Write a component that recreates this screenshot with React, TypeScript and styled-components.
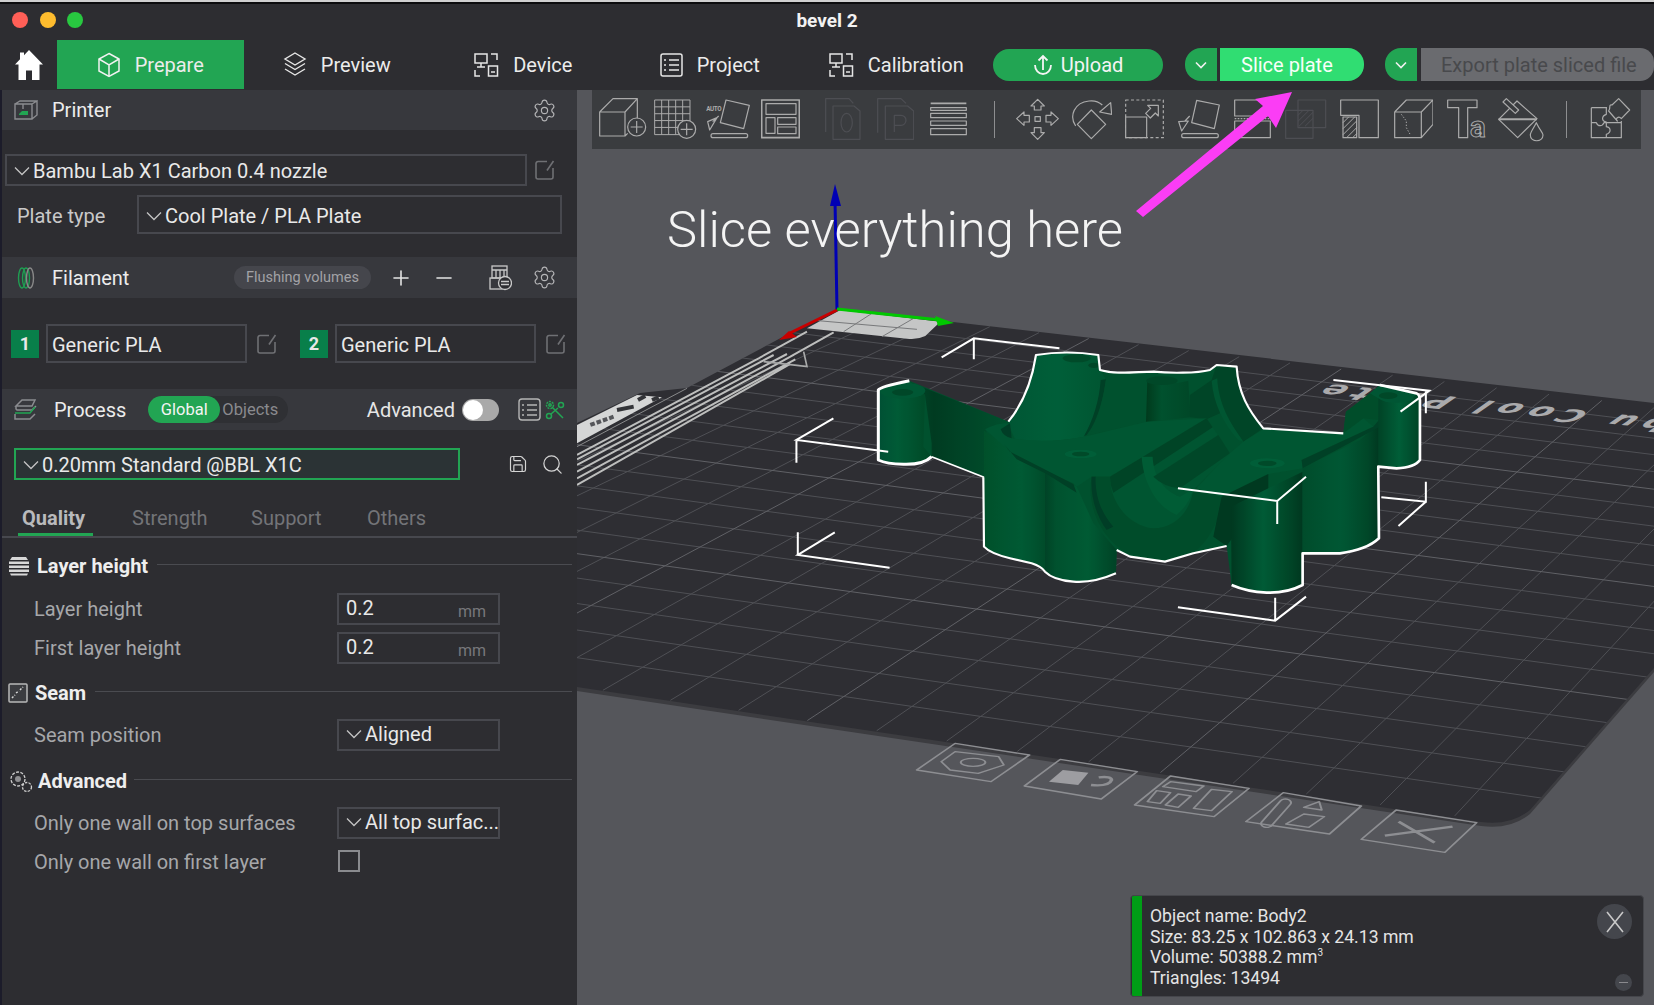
import React from 'react'
import styled, { createGlobalStyle } from 'styled-components'
import { Settings, Search, Save, Plus, Minus } from 'lucide-react'

const Global = createGlobalStyle`
  html, body { margin: 0; padding: 0; background: #2d2d31; }
  body { font-family: Roboto, "Liberation Sans", sans-serif; }
`

const Window = styled.div`
  width: 1654px;
  height: 1005px;
  overflow: hidden;
  display: flex;
  flex-direction: column;
  background: #2d2d31;
  color: #e6e6e6;
  border-top: 2px solid #d0d0d0;
  box-sizing: border-box;
`
const BlackLine = styled.div`
  height: 2px;
  background: #0c0c0e;
`
const TitleBar = styled.div`
  height: 36px;
  display: grid;
  grid-template-columns: 1fr auto 1fr;
  align-items: center;
  padding: 0 12px 4px 12px;
  box-sizing: border-box;
`
const Lights = styled.div`
  display: flex;
  gap: 11.5px;
`
const Light = styled.span<{ $c: string }>`
  width: 16px;
  height: 16px;
  border-radius: 50%;
  background: ${p => p.$c};
`
const Title = styled.div`
  font-size: 19px;
  font-weight: 700;
  color: #f2f2f2;
`
const TabBar = styled.div`
  height: 50px;
  display: flex;
  align-items: flex-start;
`
const HomeBtn = styled.div`
  width: 57px;
  height: 49px;
  display: flex;
  align-items: center;
  justify-content: center;
`
const Tab = styled.div<{ $active?: boolean }>`
  width: 186.5px;
  height: 49px;
  display: flex;
  align-items: center;
  justify-content: center;
  gap: 14px;
  font-size: 20px;
  color: #ececec;
  background: ${p => (p.$active ? '#22a553' : 'transparent')};
`
const UploadBtn = styled.div`
  margin: 9px 22px 0 3.5px;
  width: 170px;
  height: 32px;
  border-radius: 16px;
  background: #22a553;
  display: flex;
  align-items: center;
  justify-content: center;
  gap: 8px;
  font-size: 20px;
  color: #f4f4f4;
`
const DropBtn = styled.div`
  margin-top: 8px;
  width: 32px;
  height: 33px;
  border-radius: 16px 0 0 16px;
  background: #22a553;
  display: flex;
  align-items: center;
  justify-content: center;
`
const SliceBtn = styled.div`
  margin: 8px 21px 0 3px;
  width: 144px;
  height: 33px;
  border-radius: 0 16px 16px 0;
  background: #30dd72;
  display: flex;
  align-items: center;
  padding: 1px 0 0 21px;
  box-sizing: border-box;
  font-size: 20px;
  color: #f8fff9;
`
const ExportBtn = styled.div`
  margin: 8px 0 0 4px;
  width: 233px;
  height: 33px;
  border-radius: 0 14px 14px 0;
  background: #6a6b6f;
  display: flex;
  align-items: center;
  padding: 1px 0 0 20px;
  box-sizing: border-box;
  font-size: 20px;
  color: #48494c;
`
const Body = styled.div`
  flex: 1;
  display: flex;
  min-height: 0;
`
const Sidebar = styled.aside`
  width: 577px;
  flex: none;
  background: #2d2d31;
  border-left: 2px solid #1c1c2a;
  box-sizing: border-box;
  font-size: 20px;
`
const PanelHead = styled.div<{ $mt?: number; $h?: number; $pr?: number }>`
  height: ${p => p.$h ?? 40}px;
  margin-top: ${p => p.$mt ?? 0}px;
  background: #37383d;
  display: flex;
  align-items: center;
  padding: 0 ${p => p.$pr ?? 20}px 0 12px;
  box-sizing: border-box;
`
const HeadLabel = styled.span<{ $ml?: number }>`
  font-size: 20px;
  color: #ececec;
  margin-left: ${p => p.$ml ?? 14}px;
`
const Spacer = styled.span`
  flex: 1;
`
const IconBtn = styled.span<{ $ml?: number }>`
  display: inline-flex;
  margin-left: ${p => p.$ml ?? 0}px;
  color: #b9b9b9;
`
const Row = styled.div<{ $mt: number; $pl?: number }>`
  display: flex;
  align-items: center;
  margin-top: ${p => p.$mt}px;
  padding-left: ${p => p.$pl ?? 0}px;
`
const Combo = styled.div<{ $w: number; $h: number; $ml?: number; $green?: boolean; $pl?: number }>`
  width: ${p => p.$w}px;
  height: ${p => p.$h}px;
  margin-left: ${p => p.$ml ?? 0}px;
  flex: none;
  box-sizing: border-box;
  border: 2px solid ${p => (p.$green ? '#22a553' : '#47484e')};
  background: ${p => (p.$green ? '#2b3335' : 'transparent')};
  display: flex;
  align-items: center;
  gap: 3px;
  padding: ${p => (p.$h > 35 ? 3 : 1)}px 0 0 ${p => p.$pl ?? 7}px;
  font-size: 20px;
  color: #e9e9e9;
  white-space: nowrap;
  overflow: hidden;
`
const PlateLabel = styled.span`
  width: 120px;
  margin-left: 15px;
  padding-top: 2px;
  font-size: 20px;
  color: #c9c9c9;
`
const Badge = styled.span<{ $ml: number }>`
  width: 28px;
  height: 28px;
  margin-left: ${p => p.$ml}px;
  background: #087f4a;
  color: #e8e8e8;
  font-size: 18px;
  font-weight: 700;
  display: flex;
  align-items: center;
  justify-content: center;
  flex: none;
`
const FlushPill = styled.span`
  width: 137px;
  height: 23px;
  border-radius: 12px;
  background: #45464c;
  color: #a2a2a6;
  font-size: 14.5px;
  display: flex;
  align-items: center;
  justify-content: center;
`
const Segmented = styled.div`
  margin-left: 22px;
  width: 140px;
  height: 27px;
  border-radius: 14px;
  background: #2f3034;
  display: flex;
  align-items: center;
  font-size: 16.5px;
  color: #8a8a8e;
`
const SegActive = styled.span`
  width: 72px;
  height: 27px;
  border-radius: 14px;
  background: #22a553;
  color: #f4f4f4;
  display: flex;
  align-items: center;
  justify-content: center;
  margin-right: 2px;
`
const Toggle = styled.span`
  width: 37px;
  height: 22px;
  border-radius: 11px;
  background: #a9a9a9;
  margin-left: 7px;
  display: flex;
  align-items: center;
  flex: none;
`
const Knob = styled.span`
  width: 20px;
  height: 20px;
  border-radius: 50%;
  background: #fff;
  margin-left: 1px;
`
const Tabs = styled.div`
  margin-top: 20px;
  height: 36px;
  border-bottom: 2px solid #47484e;
  box-sizing: content-box;
  display: flex;
  padding-left: 20px;
`
const SubTab = styled.div<{ $active?: boolean; $w: number }>`
  width: ${p => p.$w}px;
  font-size: 20px;
  font-weight: ${p => (p.$active ? 700 : 400)};
  color: ${p => (p.$active ? '#b9babc' : '#737478')};
  height: 36px;
  line-height: 36px;
  position: relative;
  &::after {
    content: '';
    display: ${p => (p.$active ? 'block' : 'none')};
    position: absolute;
    left: -4px;
    bottom: 0;
    width: 75px;
    height: 3px;
    background: #22a553;
  }
`
const GroupHead = styled.div<{ $mt: number; $gap?: number }>`
  display: flex;
  align-items: center;
  gap: ${p => p.$gap ?? 7}px;
  margin-top: ${p => p.$mt}px;
  padding: 0 5px 0 6px;
  height: 24px;
  font-size: 20px;
  font-weight: 700;
  color: #eeeeee;
`
const GroupLine = styled.span`
  flex: 1;
  height: 1px;
  background: #4a4b50;
  margin-left: 2px;
  margin-top: -3px;
`
const Field = styled.div<{ $mt: number }>`
  display: flex;
  align-items: center;
  margin-top: ${p => p.$mt}px;
  padding-left: 32px;
  height: 32px;
`
const FieldLabel = styled.span`
  width: 303px;
  font-size: 20px;
  color: #a6a7aa;
`
const ValueBox = styled.div`
  width: 163px;
  height: 32px;
  box-sizing: border-box;
  border: 2px solid #47484e;
  display: flex;
  align-items: center;
  padding: 0 12px 2px 7px;
  font-size: 20px;
  color: #e8e8e8;
  white-space: nowrap;
  overflow: hidden;
`
const Unit = styled.span`
  margin-left: auto;
  font-size: 16px;
  color: #77787c;
  padding-top: 7px;
`
const SelectBox = styled(ValueBox)`
  gap: 3px;
  padding: 0 0 2px 7px;
`
const CheckBox = styled.span`
  width: 22px;
  height: 22px;
  margin: -3px 0 0 1px;
  box-sizing: border-box;
  border: 2px solid #8a8b8f;
`
const Viewport = styled.main`
  position: relative;
  flex: 1;
  background: #55565b;
  overflow: hidden;
`
const Scene = styled.svg`
  position: absolute;
  inset: 0;
  width: 100%;
  height: 100%;
`
const ModelShading = styled.g`
  filter: brightness(0.9);
`
const Toolbar = styled.div`
  position: absolute;
  left: 15px;
  top: 0;
  width: 1049px;
  height: 59px;
  background: #3a3c3f;
  display: flex;
  align-items: center;
  padding-left: 4.4px;
  box-sizing: border-box;
`
const ToolGroup = styled.div<{ $slot: number; $ml?: number }>`
  display: flex;
  flex: none;
  margin-left: ${p => p.$ml ?? 0}px;
  & > span {
    width: ${p => p.$slot}px;
    display: flex;
    justify-content: center;
  }
`
const Divider = styled.span<{ $ml: number }>`
  width: 1px;
  height: 37px;
  background: #8d8e90;
  margin-left: ${p => p.$ml}px;
  flex: none;
`
const Callout = styled.div`
  position: absolute;
  left: 90px;
  top: 108px;
  font-family: Roboto, "Liberation Sans", sans-serif;
  font-weight: 300;
  font-size: 50.7px;
  line-height: 64px;
  color: #f4f4f4;
  white-space: nowrap;
`
const Notice = styled.div`
  position: absolute;
  right: 10px;
  bottom: 8px;
  width: 514px;
  height: 102px;
  box-sizing: border-box;
  border: 1px solid #45464b;
  border-radius: 4px;
  background: #2d2d31;
  display: flex;
  overflow: hidden;
`
const NoticeBar = styled.span`
  width: 10px;
  margin-left: 1px;
  background: #009e16;
  flex: none;
`
const NoticeText = styled.div`
  margin: 10px 0 0 8px;
  font-size: 17.6px;
  line-height: 20.7px;
  color: #e4e4e4;
  white-space: nowrap;
  & sup { font-size: 10px; line-height: 0; }
`
const CloseBtn = styled.span`
  position: absolute;
  right: 11px;
  top: 8px;
  width: 35px;
  height: 35px;
  border-radius: 50%;
  background: #44464c;
  display: flex;
  align-items: center;
  justify-content: center;
`
const MinBtn = styled.span`
  position: absolute;
  right: 11px;
  bottom: 5px;
  width: 17px;
  height: 17px;
  border-radius: 50%;
  background: #44464c;
  display: flex;
  align-items: center;
  justify-content: center;
`

/* little icons */
const Chevron = ({ c = '#c4c4c4' }: { c?: string }) => (
  <svg width="16" height="10" viewBox="0 0 16 10" fill="none" style={{ flex: 'none' }}>
    <path d="M1 1.5 8 8.5 15 1.5" stroke={c} strokeWidth="1.3" />
  </svg>
)
const SmallChev = () => (
  <svg width="12" height="8" viewBox="0 0 12 8" fill="none">
    <path d="M1 1.5 6 6.5 11 1.5" stroke="#f0f0f0" strokeWidth="1.6" />
  </svg>
)
const EditIcon = () => (
  <svg width="20" height="20" viewBox="0 0 20 20" fill="none" stroke="#6f7074" strokeWidth="1.6">
    <path d="M12 1.5H3a2 2 0 0 0-2 2V17a2 2 0 0 0 2 2h13a2 2 0 0 0 2-2V8" />
    <path d="M18.5 1 12 10.5" />
  </svg>
)
const Cog = () => <Settings size={25} strokeWidth={1.1} color="#b4b4b6" />

const Home = () => (
  <svg width="28" height="30" viewBox="0 0 28 30" fill="#fff">
    <path d="M14 0 28 14.5h-3.5V30H17V20.5h-6V30H3.5V14.5H0L5 9.3V2.5h4v2.700z" />
  </svg>
)
const BoxIcon = () => (
  <svg width="24" height="26" viewBox="0 0 24 26" fill="none" stroke="#f2f2f2" strokeWidth="1.5">
    <path d="M12 1.5 22 7v12l-10 5.500L2 19V7z" />
    <path d="M2 7l10 6 10-6M12 13v11" />
  </svg>
)
const LayersIcon = () => (
  <svg width="24" height="25" viewBox="0 0 24 25" fill="none" stroke="#e6e6e6" strokeWidth="1.4">
    <path d="M12 1 22 7l-10 6L2 7z" />
    <path d="M2 11.5l10 6 10-6M2 17l10 6 10-6" />
  </svg>
)
const DeviceIcon = () => (
  <svg width="25" height="24" viewBox="0 0 25 24" fill="none" stroke="#e6e6e6" strokeWidth="1.5">
    <rect x="1" y="1" width="12" height="9" />
    <path d="M7 10v4M3 14h8M17 1h6v6M1 17v6h5" />
    <rect x="14.5" y="13" width="9" height="10" />
    <path d="M17 19h4" />
  </svg>
)
const ProjectIcon = () => (
  <svg width="23" height="24" viewBox="0 0 23 24" fill="none" stroke="#e6e6e6" strokeWidth="1.5">
    <rect x="1" y="1" width="21" height="22" rx="2" />
    <path d="M4 7h2M9 7h10M4 12h2M9 12h10M4 17h2M9 17h10" />
  </svg>
)
const UploadIcon = () => (
  <svg width="20" height="22" viewBox="0 0 20 22" fill="none" stroke="#f4f4f4" strokeWidth="1.8">
    <path d="M10 16V2M5.500 6.500 10 2l4.500 4.500" />
    <path d="M2 11c0 5 3.500 9 8 9s8-4 8-9" />
  </svg>
)
const PrinterIcon = () => (
  <svg width="24" height="20" viewBox="0 0 24 20" fill="none" stroke="#8b8c90" strokeWidth="1.4">
    <path d="M1 4h17v15H1zM18 4l5-3v14l-5 4M1 4l5-3h17" />
    <path d="M9 4v5" />
    <path d="M5 14l3-3h6v4H5z" fill="#22a553" stroke="none" />
  </svg>
)
const SpoolIcon = () => (
  <svg width="24" height="22" viewBox="0 0 24 22" fill="none" stroke="#888" strokeWidth="1.4">
    <ellipse cx="8" cy="11" rx="3.5" ry="10" stroke="#1f9d52" />
    <ellipse cx="12" cy="11" rx="3.5" ry="10" stroke="#1f9d52" />
    <ellipse cx="16" cy="11" rx="3.5" ry="10" />
  </svg>
)
const ProcessIcon = () => (
  <svg width="23" height="21" viewBox="0 0 23 21" fill="none" strokeWidth="1.5">
    <path d="M2 7 8 1h13l-3 6z" stroke="#8b8c90" />
    <path d="M2 7v3l1 1h15l4-4" stroke="#8b8c90" />
    <path d="M1 14h15l5-6" stroke="#22a553" />
    <path d="M1 15v5h15l5-5" stroke="#8b8c90" />
  </svg>
)
const MatrixIcon = () => (
  <svg width="23" height="23" viewBox="0 0 23 23" fill="none" stroke="#b5b5b5" strokeWidth="1.4">
    <rect x="1" y="1" width="21" height="21" rx="3" />
    <path d="M4 7h2M9 7h10M4 12h2M9 12h10M4 17h2M9 17h10" />
  </svg>
)
const ToolsIcon = () => (
  <svg width="20" height="20" viewBox="0 0 20 20" fill="none" stroke="#22a553" strokeWidth="1.5">
    <circle cx="5" cy="5" r="3.5" strokeDasharray="2 1" />
    <circle cx="5" cy="5" r="1.2" />
    <circle cx="16" cy="5" r="2.5" />
    <circle cx="4" cy="16" r="2.5" />
    <path d="M7 7l11 11M13 8l-7 6" />
  </svg>
)
const BlendIcon = () => (
  <svg width="23" height="26" viewBox="0 0 23 26" fill="none" stroke="#c9c9c9" strokeWidth="1.3">
    <rect x="3" y="1" width="15" height="12" />
    <path d="M3 5h15M7 5v8M11 5v8M15 5v8" />
    <rect x="1" y="13" width="12" height="11" />
    <circle cx="16" cy="18" r="6.5" fill="#2d2d31" />
    <path d="M12 16.5h8M12 19.5h8" />
  </svg>
)
const StackIcon = () => (
  <svg width="22" height="20" viewBox="0 0 22 20" fill="#d8d8d8">
    <path d="M4 1h14l2 3H2z" />
    <path d="M1 5.5h20v2.500H1zM1 9.5h20v2.500H1zM1 13.5h20v2.500H1zM2 17.5h18l-1 2H3z" />
  </svg>
)
const SeamIcon = () => (
  <svg width="20" height="20" viewBox="0 0 20 20" fill="none" stroke="#b8b8b8" strokeWidth="1.5">
    <rect x="1" y="1" width="18" height="18" rx="1" fill="#3b3c40" />
    <path d="M4 15 7 12M8 10l3-2M12 7l3-3" strokeDasharray="2 1.5" stroke="#d8d8d8" />
  </svg>
)
const GearsIcon = () => (
  <svg width="25" height="24" viewBox="0 0 25 24" fill="none" stroke="#cfcfcf" strokeWidth="1.3">
    <circle cx="10" cy="10" r="7" strokeDasharray="3 1.4" />
    <circle cx="10" cy="10" r="3" fill="#8f8f92" stroke="none" />
    <circle cx="19" cy="18" r="4.5" strokeDasharray="2.5 1.2" fill="#2d2d31" />
  </svg>
)

/* toolbar icons are traced at three times their size, x0..x0+w is the span of the glyph */
const TI = ({ x, w, dim, children }: { x: number; w: number; dim?: boolean; children: React.ReactNode }) => (
  <svg width={w / 3} height={140 / 3} viewBox={`${x} 20 ${w} 140`} fill="none" stroke={dim ? '#4d4e53' : '#ababab'} strokeWidth="3.6" strokeLinejoin="round">
    {children}
  </svg>
)
const tb = '#3a3c3f'
const gridSteps = [0, 21, 42, 63, 84, 106]
const hatch = 'M560 78 575 63M560 96 593 63M563 111 605 69M581 111 605 87'

const tools = {
  cube: <TI x={20} w={144}><path d="M22 68H98V140H22ZM22 68 62 28H135L98 68M135 28V88M98 140l8-8" /><circle cx="133" cy="113" r="27" fill={tb} /><path d="M133 95V131M115 113H151" /></TI>,
  grid: <TI x={185} w={128}><path d={gridSteps.map(g => `M${187 + g} 32V136M187 ${32 + g * 0.98}H293`).join('')} strokeWidth="3" /><circle cx="283" cy="120" r="27" fill={tb} /><path d="M283 102V138M265 120H301" /></TI>,
  auto: <TI x={342} w={132}><path d="M402 32 472 48 455 118 385 100Z" /><path d="M347 97 375 85 353 122ZM362 97 380 80" /><rect x="357" y="133" width="110" height="12" rx="6" /><text x="343" y="66" fontSize="19" fontWeight="700" fill="#ababab" stroke="none" fontFamily="Roboto" textLength="46">AUTO</text></TI>,
  layout: <TI x={505} w={117}><rect x="507" y="32" width="113" height="113" strokeWidth="5" /><rect x="520" y="43" width="90" height="32" /><rect x="520" y="85" width="27" height="47" /><rect x="555" y="85" width="55" height="20" /><rect x="555" y="113" width="55" height="20" /></TI>,
  o: <TI x={698} w={107} dim><path d="M700 128V28H770L783 42M722 50H785L803 65V150H722Z" /><ellipse cx="763" cy="100" rx="17" ry="28" /></TI>,
  p: <TI x={853} w={112} dim><path d="M855 130V28H925L940 42M878 50H945L963 65V150H878Z" /><path d="M905 128V78H925a15 15 0 0 1 0 30H905" /></TI>,
  layers: <TI x={1013} w={111}><path d="M1015 42H1122" strokeWidth="5" /><rect x="1015" y="55" width="107" height="8" /><rect x="1015" y="72" width="107" height="13" /><rect x="1015" y="95" width="107" height="13" /><rect x="1015" y="118" width="107" height="18" /></TI>,
  move: <TI x={1273} w={129}><path d="M1338 30 1358 50H1348V62H1328V50H1318ZM1338 150 1358 130H1348V115H1328V130H1318ZM1275 88 1297 68V78H1313V98H1297V108ZM1400 88 1378 68V78H1363V98H1378V108Z" /><rect x="1330" y="82" width="16" height="14" /></TI>,
  rotate: <TI x={1436} w={124}><path d="M1497 62 1540 105 1497 148 1455 105Z" /><path d="M1450 110C1430 80 1445 40 1490 35 1505 33 1520 38 1530 47" /><path d="M1555 40 1558 75 1522 68Z" /></TI>,
  scale: <TI x={40} w={118}><path d="M42 32H155V145H42Z" strokeDasharray="9 7" /><rect x="42" y="83" width="63" height="62" fill={tb} /><path d="M108 48H140V80L131 71 116 86 102 72 117 57Z" /></TI>,
  flatten: <TI x={201} w={126}><path d="M257 33 325 47 310 118 242 100Z" /><path d="M203 97 232 95 212 125ZM222 95 236 80" /><rect x="212" y="133" width="110" height="12" rx="6" /></TI>,
  cut: <TI x={368} w={111}><rect x="370" y="32" width="107" height="48" /><path d="M370 88H477" strokeDasharray="5 4" /><rect x="370" y="95" width="107" height="50" /></TI>,
  overlap: <TI x={521} w={124} dim><rect x="560" y="32" width="83" height="83" /><rect x="523" y="63" width="82" height="84" /><path d={hatch} strokeWidth="3" /></TI>,
  lshape: <TI x={688} w={117}><path d="M690 32H803V145H745V78H690Z" /><path d="M697 83H738V145H697Z" /><path d="M697 100 714 83M697 118 732 83M697 136 738 95M708 145 738 115M726 145 738 133" strokeWidth="3" /></TI>,
  crack: <TI x={848} w={119}><path d="M850 68H930V145H850ZM850 68 885 32H965L930 68M965 32V105L930 145" /><path d="M870 75 885 95 885 115 898 138" strokeDasharray="4 5" strokeWidth="3" /></TI>,
  ta: <TI x={1010} w={120}><path d="M1012 32H1100V55H1072V145H1045V55H1012Z" /><text x="1079" y="144" fontSize="88" fontFamily="Roboto" fontWeight="700" strokeWidth="3">a</text></TI>,
  bucket: <TI x={1163} w={137}><path d="M1220 35 1280 88 1222 145 1165 90Z" /><path d="M1165 90H1280" strokeWidth="6" /><path d="M1178 38 1188 28 1225 62 1215 72Z" fill={tb} /><path d="M1278 100C1265 125 1260 130 1260 137 1260 160 1298 160 1298 137 1298 130 1290 125 1278 100Z" /></TI>,
  puzzle: <TI x={1436} w={122}><path d="M1440 55H1487M1440 55V145H1530V95M1485 55V75C1470 80 1470 95 1485 98V112C1500 115 1500 130 1485 135V145M1440 100H1455C1460 112 1472 112 1478 100H1530" /><path d="M1522 28 1555 62 1530 88C1522 78 1510 88 1518 95L1505 80 1492 65C1500 55 1490 45 1502 47Z" /></TI>,
}

/* the bed grid */
const quad = [[844, 309], [1871, 433], [1530, 827], [146, 623]]
const homography = () => {
  const [[x0, y0], [x1, y1], [x2, y2], [x3, y3]] = quad
  const dx1 = x1 - x2, dx2 = x3 - x2, sx = x0 - x1 + x2 - x3
  const dy1 = y1 - y2, dy2 = y3 - y2, sy = y0 - y1 + y2 - y3
  const den = dx1 * dy2 - dx2 * dy1
  const g = (sx * dy2 - dx2 * sy) / den
  const h = (dx1 * sy - sx * dy1) / den
  const a = x1 - x0 + g * x1, b = x3 - x0 + h * x3
  const d = y1 - y0 + g * y1, e = y3 - y0 + h * y3
  return (u: number, v: number) => {
    const w = g * u + h * v + 1
    return `${((a * u + b * v + x0) / w).toFixed(1)} ${((d * u + e * v + y0) / w).toFixed(1)}`
  }
}
const gridPaths = () => {
  const map = homography()
  const n = 20
  let minor = ''
  let major = ''
  for (let i = 1; i < n; i++) {
    const t = i / n
    const seg = `M${map(t, 0)}L${map(t, 1)}M${map(0, t)}L${map(1, t)}`
    if (i % 5 === 0) major += seg
    else minor += seg
  }
  return { minor, major }
}
const { minor, major } = gridPaths()
const platePath = 'M837 310L953 322 1654 403V668L1530 810Q1510 826 1481 822L577 687V423L640 393 687 388 790 333Z'

const Bed = () => (
  <>
    <defs>
      <clipPath id="plate"><path d={platePath} /></clipPath>
    </defs>
    <path d={platePath} fill="#3c3c40" transform="translate(0 4)" />
    <path d={platePath} fill="#2e2e33" />
    <g clipPath="url(#plate)" fill="none">
      <path d={minor} stroke="#4f5055" strokeWidth="1" />
      <path d={major} stroke="#606166" strokeWidth="1" />
    </g>
    <g clipPath="url(#plate)">
      {/* corner tile and stripes, traced at 3x */}
      <g transform="translate(577 300) scale(.3333)" fill="none" stroke="#bdbebd" strokeWidth="6">
        <path d="M790 30 1090 65 1045 108Q1020 120 990 116L690 85Z" fill="#c5c6c6" stroke="none" />
        <path d="M700 60 1020 88M885 40 800 95M1010 55 915 110" stroke="#77787a" strokeWidth="3" />
        <path d="M690 95 545 175M770 97 640 170M640 192 0 555M655 178 0 535M650 165 0 515M630 162 0 495M590 165 0 478M545 175 0 465" />
        <path d="M680 155 690 200 560 185" stroke="#a9aaaa" strokeWidth="5" />
        <path d="M0 440 330 265" stroke="#8a8b8c" strokeWidth="3" />
        <path d="M0 375 180 285 255 292 0 430Z" fill="#d5d6d6" stroke="none" />
        <g stroke="#333438" strokeWidth="12">
          <path d="M183 300 205 288M225 300 245 292M120 330 170 320" />
        </g>
        <path d="M40 375 110 350" stroke="#55565a" strokeWidth="12" strokeDasharray="14 6" />
      </g>
    </g>
    <text transform="translate(1323 383) rotate(186) skewX(-49) scale(1.8 1)" textAnchor="end" fontFamily="DejaVu Sans, sans-serif" fontWeight="700" fontSize="19" letterSpacing="4.2" fill="#aaaaac">Bambu Cool Plate</text>
    {/* logos printed in front of the bed */}
    <g transform="translate(850 720) scale(.5128 .3333)" fill="none" stroke="#8d8e92" strokeWidth="4" strokeLinejoin="round">
      <path d="M205 70 350 105 275 185 130 150z" />
      <path d="M205 95 290 110 300 135 250 160 195 150 178 125z" />
      <ellipse cx="240" cy="127" rx="24" ry="12" />
      <path d="M410 118 560 155 490 237 340 198z" />
      <path d="M415 150 465 158 445 195 388 185z" fill="#9d9da1" stroke="none" />
      <path d="M470 195Q505 200 510 180 510 168 485 172" strokeWidth="7" />
      <path d="M625 168 778 205 710 290 555 255z" />
      <path d="M625 185 690 198 675 215 610 200zM598 212 625 218 605 250 580 245zM640 222 665 228 640 262 615 255zM705 208 745 215 705 272 670 265z" />
      <path d="M845 218 997 258 935 342 772 305z" />
      <rect x="0" y="0" width="22" height="95" rx="11" transform="translate(845 233) rotate(30)" />
      <path d="M885 282 925 290 895 322 850 312zM885 262 915 245 920 270z" />
      <path d="M1065 270 1222 308 1160 397 997 358z" />
      <path d="M1043 347 1175 320M1070 305 1140 368" strokeWidth="7" />
    </g>
  </>
)

const Grad = ({ id, stops }: { id: string; stops: [number, string][] }) => (
  <linearGradient id={id} x1="0" x2="1" y1="0" y2="0">
    {stops.map(([o, c]) => <stop key={o} offset={o} stopColor={c} />)}
  </linearGradient>
)

const silhouette =
  'M55 150Q60 140 148 122L445 245C490 190 515 130 528 45Q620 30 715 45L720 90C770 105 830 95 880 95 930 100 1010 100 1050 90L1070 75 1130 80C1135 160 1165 210 1210 265L1450 280 1458 215 1530 160 1560 135 1670 160Q1680 165 1680 180L1680 360Q1665 382 1610 385L1555 380 1557 595Q1520 630 1440 640L1328 640 1328 735Q1280 760 1220 758 1160 755 1115 735L1100 618 1000 640 915 665 810 650 770 630 768 700Q700 730 640 725 580 720 555 695 545 680 515 670L450 655Q390 640 372 620L370 412 215 350Q190 375 130 373 80 372 55 360Z'

const Model = () => (
  <>
    <g transform="translate(860 340) scale(.3333)">
      <defs>
        <Grad id="post" stops={[[0, '#00593a'], [0.35, '#00653c'], [0.8, '#00562f'], [1, '#004e2b']]} />
        <Grad id="arm" stops={[[0, '#004f2c'], [0.25, '#004225'], [1, '#005a33']]} />
        <Grad id="lobe" stops={[[0, '#00603a'], [0.5, '#00693f'], [1, '#005f37']]} />
        <Grad id="leftA" stops={[[0, '#00592f'], [0.6, '#00643a'], [1, '#00532e']]} />
        <Grad id="leftB" stops={[[0, '#004a2a'], [0.15, '#005a33'], [0.6, '#00653a'], [1, '#004a2a']]} />
        <Grad id="colR" stops={[[0, '#003e23'], [0.45, '#00653c'], [0.8, '#004e2c'], [1, '#003e23']]} />
        <Grad id="bodyR" stops={[[0, '#005530'], [0.5, '#00613a'], [0.85, '#004f2d'], [1, '#003f24']]} />
        <Grad id="tabR" stops={[[0, '#004a2a'], [0.5, '#00683e'], [1, '#004a2a']]} />
        <Grad id="stem" stops={[[0, '#00401f'], [0.35, '#005a33'], [1, '#004f2c']]} />
      </defs>
      <ModelShading>
        <path d={silhouette} fill="#005a33" />
        {/* left post and arm */}
        <path d="M195 165 148 125 445 245 380 270 372 412 215 350 215 310Z" fill="url(#arm)" />
        <path d="M57 150Q60 140 148 124L195 165 190 320 215 350Q190 375 130 373 80 372 57 360Z" fill="url(#post)" />
        <ellipse cx="128" cy="152" rx="68" ry="24" fill="#00613a" />
        <ellipse cx="128" cy="157" rx="32" ry="10" fill="#004f2d" />
        {/* rear lobe */}
        <path d="M445 250C490 190 515 130 528 45Q620 30 715 45L720 90 738 118C730 180 705 250 672 290Q560 312 465 297Z" fill="url(#lobe)" />
        <ellipse cx="650" cy="55" rx="42" ry="12" fill="#00522e" />
        <ellipse cx="702" cy="76" rx="17" ry="8" fill="#004f2d" />
        <path d="M722 120 738 118C730 180 710 250 680 285L672 288C700 240 718 180 722 120Z" fill="#00472a" />
        {/* back centre with its post */}
        <path d="M738 118 720 90C770 105 830 95 880 95 930 100 1010 100 1050 90L1060 120 990 165 990 232 860 245 690 285C715 230 730 180 738 118Z" fill="#005a33" />
        <path d="M862 125Q920 140 985 122L992 232 858 246Z" fill="url(#stem)" />
        <ellipse cx="906" cy="122" rx="47" ry="13" fill="#00502d" />
        {/* right of centre */}
        <path d="M990 165 1055 120 1070 75 1130 80C1135 160 1165 210 1210 265L1150 305 1090 215 1040 238 990 232Z" fill="#004d2b" />
        <path d="M1055 122 1072 115C1075 190 1110 250 1150 305L1135 300C1090 250 1060 190 1055 122Z" fill="#005f37" />
        {/* left body */}
        <path d="M372 272 560 395 555 695Q545 680 515 670L450 655Q390 640 372 620Z" fill="url(#leftA)" />
        <path d="M555 395 650 440 700 550 770 630 768 700Q700 730 640 725 580 720 555 695Z" fill="url(#leftB)" />
        {/* top plate */}
        <path d="M375 268C400 255 420 250 445 250L455 295Q560 312 672 290L860 245 1040 235 880 350 750 410 695 410 650 440 640 430 560 395 450 335Z" fill="#005f37" />
        <path d="M422 268 450 250 455 295Q430 290 422 268Z" fill="#00452a" />
        <path d="M432 312 450 335 640 432 650 458 560 402 470 358Z" fill="#00472a" />
        <ellipse cx="662" cy="342" rx="48" ry="13" fill="#00683e" />
        <ellipse cx="662" cy="342" rx="26" ry="7" fill="#00522e" />
        {/* arch */}
        <path d="M695 410C680 500 720 590 800 640L915 665 1000 640C1060 590 1085 520 1085 470L1010 440 880 350 750 410Z" fill="#00552f" />
        <path d="M695 410C690 470 710 530 740 570L760 560C725 520 705 470 707 410Z" fill="#00442a" />
        <path d="M750 410 1040 235 1110 340 1000 450C990 520 940 565 880 565 810 560 750 490 750 410Z" fill="#005e36" />
        <path d="M750 410 1040 235 1058 262 760 458Q750 435 750 410Z" fill="#004b2a" />
        <path d="M845 350 878 350C880 400 905 450 960 470L985 455 1000 450C990 480 975 505 950 525 890 500 850 430 845 350Z" fill="#00663b" />
        <path d="M880 410 1075 285 1110 340 960 445Q910 440 880 410Z" fill="#004f2d" />
        {/* right plate */}
        <path d="M1210 268 1450 280 1510 235 1540 260 1325 360 1330 385 1225 402 1085 470 1010 445 1060 390 1110 340 1150 305Z" fill="#005f37" />
        <ellipse cx="1222" cy="370" rx="52" ry="15" fill="#00683e" />
        <ellipse cx="1222" cy="370" rx="28" ry="8" fill="#00522e" />
        {/* right column and body */}
        <path d="M1085 470 1225 402 1225 470 1113 600 1100 618 1060 590Z" fill="#003f24" />
        <path d="M1113 500 1328 395V735Q1280 760 1220 758 1160 755 1115 735Z" fill="url(#colR)" />
        <path d="M1328 385 1500 300 1557 250V595Q1520 630 1440 640L1328 640Z" fill="url(#bodyR)" />
        <path d="M1325 360 1540 260 1557 240V262L1328 385Z" fill="#00472a" />
        {/* right tab */}
        <path d="M1458 215 1530 160 1555 170 1557 240 1510 235 1450 280Z" fill="#00562f" />
        <path d="M1555 135 1670 160Q1680 165 1680 180L1680 360Q1665 382 1610 385L1555 380Z" fill="url(#tabR)" />
        <path d="M1530 160 1560 135 1670 160 1655 180Q1590 200 1555 175Z" fill="#00603a" />
        <ellipse cx="1585" cy="167" rx="28" ry="10" fill="#00502d" />
      </ModelShading>
      <g fill="none" stroke="#fff" strokeWidth="6.5" strokeLinejoin="round">
        <path d="M215 350Q190 375 130 373 80 372 55 360V150Q60 140 148 122" strokeWidth="9" />
        <path d="M372 412 215 350" strokeWidth="5" />
        <path d="M445 245C490 190 515 130 528 45Q620 30 715 45L720 90C770 105 830 95 880 95 930 100 1010 100 1050 90L1070 75 1130 80C1135 160 1165 210 1210 265L1450 280" />
        <path d="M1560 135 1670 160Q1680 165 1680 180L1680 360Q1665 382 1610 385L1555 380 1557 595Q1520 630 1440 640L1328 640 1328 735Q1280 760 1220 758 1160 755 1115 735" strokeWidth="8" />
        <path d="M1100 618 1000 640 915 665 810 650 770 630" />
        <path d="M768 700Q700 730 640 725 580 720 555 695 545 680 515 670L450 655Q390 640 372 620L370 412" />
      </g>
    </g>
    <g transform="translate(580 300) scale(.6849 .3333)">
      <path d="M528 172 575 115 700 145M575 115V178M370 355 316 420 450 455M316 420V488M372 697 318 765 452 803M318 765V697M873 565 1018 603 1060 530M1018 603V672M873 922 1015 962 1060 890M1015 962V893M1235 545V605L1170 592M1235 605 1195 678M1100 240 1240 272 1198 335M1235 272V340" fill="none" stroke="#fff" strokeWidth="2" vectorEffect="non-scaling-stroke" />
    </g>
  </>
)

const Axes = () => (
  <g fill="none">
    <path d="M837 310 835 200" stroke="#0000b4" strokeWidth="3" />
    <path d="M835 184 830 206H841z" fill="#0000b4" />
    <path d="M837 309 940 320" stroke="#00c800" strokeWidth="3" />
    <path d="M954 323 935 316 938 326z" fill="#00c800" />
    <path d="M837 310 790 333" stroke="#c80000" strokeWidth="3" />
    <path d="M779 340 789 331 797 337z" fill="#c80000" />
  </g>
)

export default function App() {
  return (
    <Window>
      <Global />
      <BlackLine />
      <TitleBar>
        <Lights>
          <Light $c="#ff5f57" />
          <Light $c="#febc2e" />
          <Light $c="#28c840" />
        </Lights>
        <Title>bevel 2</Title>
      </TitleBar>
      <TabBar>
        <HomeBtn><Home /></HomeBtn>
        <Tab $active><BoxIcon />Prepare</Tab>
        <Tab><LayersIcon />Preview</Tab>
        <Tab><DeviceIcon />Device</Tab>
        <Tab><ProjectIcon />Project</Tab>
        <Tab><DeviceIcon />Calibration</Tab>
        <UploadBtn><UploadIcon />Upload</UploadBtn>
        <DropBtn><SmallChev /></DropBtn>
        <SliceBtn>Slice plate</SliceBtn>
        <DropBtn><SmallChev /></DropBtn>
        <ExportBtn>Export plate sliced file</ExportBtn>
      </TabBar>
      <Body>
        <Sidebar>
          <PanelHead>
            <PrinterIcon />
            <HeadLabel>Printer</HeadLabel>
            <Spacer />
            <IconBtn><Cog /></IconBtn>
          </PanelHead>
          <Row $mt={24} $pl={3}>
            <Combo $w={522} $h={32}><Chevron />Bambu Lab X1 Carbon 0.4 nozzle</Combo>
            <IconBtn $ml={8}><EditIcon /></IconBtn>
          </Row>
          <Row $mt={9}>
            <PlateLabel>Plate type</PlateLabel>
            <Combo $w={425} $h={39}><Chevron />Cool Plate / PLA Plate</Combo>
          </Row>
          <PanelHead $mt={23} $h={41}>
            <SpoolIcon />
            <HeadLabel>Filament</HeadLabel>
            <Spacer />
            <FlushPill>Flushing volumes</FlushPill>
            <IconBtn $ml={18}><Plus size={24} strokeWidth={1.6} color="#e4e4e4" /></IconBtn>
            <IconBtn $ml={19}><Minus size={24} strokeWidth={1.6} color="#e4e4e4" /></IconBtn>
            <IconBtn $ml={33}><BlendIcon /></IconBtn>
            <IconBtn $ml={20}><Cog /></IconBtn>
          </PanelHead>
          <Row $mt={26}>
            <Badge $ml={9}>1</Badge>
            <Combo $w={201} $h={39} $ml={7} $pl={4}>Generic PLA</Combo>
            <IconBtn $ml={10}><EditIcon /></IconBtn>
            <Badge $ml={23}>2</Badge>
            <Combo $w={201} $h={39} $ml={7} $pl={4}>Generic PLA</Combo>
            <IconBtn $ml={10}><EditIcon /></IconBtn>
          </Row>
          <PanelHead $mt={26} $h={41} $pr={12}>
            <ProcessIcon />
            <HeadLabel $ml={17}>Process</HeadLabel>
            <Segmented><SegActive>Global</SegActive>Objects</Segmented>
            <Spacer />
            <span>Advanced</span>
            <Toggle><Knob /></Toggle>
            <IconBtn $ml={19}><MatrixIcon /></IconBtn>
            <IconBtn $ml={4}><ToolsIcon /></IconBtn>
          </PanelHead>
          <Row $mt={18} $pl={12}>
            <Combo $w={446} $h={32} $green><Chevron />0.20mm Standard @BBL X1C</Combo>
            <IconBtn $ml={48}><Save size={20} strokeWidth={1.4} color="#d4d4d4" /></IconBtn>
            <IconBtn $ml={13}><Search size={23} strokeWidth={1.3} color="#d4d4d4" /></IconBtn>
          </Row>
          <Tabs>
            <SubTab $active $w={110}>Quality</SubTab>
            <SubTab $w={119}>Strength</SubTab>
            <SubTab $w={116}>Support</SubTab>
            <SubTab $w={80}>Others</SubTab>
          </Tabs>
          <GroupHead $mt={16}><StackIcon />Layer height<GroupLine /></GroupHead>
          <Field $mt={15}><FieldLabel>Layer height</FieldLabel><ValueBox>0.2<Unit>mm</Unit></ValueBox></Field>
          <Field $mt={7}><FieldLabel>First layer height</FieldLabel><ValueBox>0.2<Unit>mm</Unit></ValueBox></Field>
          <GroupHead $mt={17}><SeamIcon />Seam<GroupLine /></GroupHead>
          <Field $mt={14}><FieldLabel>Seam position</FieldLabel><SelectBox><Chevron />Aligned</SelectBox></Field>
          <GroupHead $mt={18} $gap={5}><GearsIcon />Advanced<GroupLine /></GroupHead>
          <Field $mt={14}><FieldLabel>Only one wall on top surfaces</FieldLabel><SelectBox><Chevron />All top surfac...</SelectBox></Field>
          <Field $mt={7}><FieldLabel>Only one wall on first layer</FieldLabel><CheckBox /></Field>
        </Sidebar>
        <Viewport>
          <Scene viewBox="577 90 1077 915">
            <Bed />
            <Axes />
            <Model />
          </Scene>
          <Toolbar>
            <ToolGroup $slot={52.6}>
              <span>{tools.cube}</span>
              <span>{tools.grid}</span>
              <span>{tools.auto}</span>
              <span>{tools.layout}</span>
            </ToolGroup>
            <ToolGroup $slot={53} $ml={9.5}>
              <span>{tools.o}</span>
              <span>{tools.p}</span>
              <span>{tools.layers}</span>
            </ToolGroup>
            <Divider $ml={18.4} />
            <ToolGroup $slot={53.7} $ml={16.2}>
              <span>{tools.move}</span>
              <span>{tools.rotate}</span>
              <span>{tools.scale}</span>
              <span>{tools.flatten}</span>
              <span>{tools.cut}</span>
              <span>{tools.overlap}</span>
              <span>{tools.lshape}</span>
              <span>{tools.crack}</span>
              <span>{tools.ta}</span>
              <span>{tools.bucket}</span>
            </ToolGroup>
            <Divider $ml={18} />
            <ToolGroup $slot={53.7} $ml={17.1}>
              <span>{tools.puzzle}</span>
            </ToolGroup>
          </Toolbar>
          <Callout>Slice everything here</Callout>
          <Scene viewBox="577 90 1077 915">
            <path d="M1136 211 1263 106 1255 99 1292 92 1276 128 1268 116 1143 217z" fill="#fb3df5" />
          </Scene>
          <Notice>
            <NoticeBar />
            <NoticeText>
              Object name: Body2<br />
              Size: 83.25 x 102.863 x 24.13 mm<br />
              Volume: 50388.2 mm<sup>3</sup><br />
              Triangles: 13494
            </NoticeText>
            <CloseBtn>
              <svg width="22" height="24" viewBox="0 0 22 24" stroke="#c8c8c8" strokeWidth="1.6"><path d="M3 2 19 22M19 2 3 22" /></svg>
            </CloseBtn>
            <MinBtn>
              <svg width="9" height="3" viewBox="0 0 9 3" stroke="#8a8a8e" strokeWidth="1.2"><path d="M0 1.5H9" /></svg>
            </MinBtn>
          </Notice>
        </Viewport>
      </Body>
    </Window>
  )
}
